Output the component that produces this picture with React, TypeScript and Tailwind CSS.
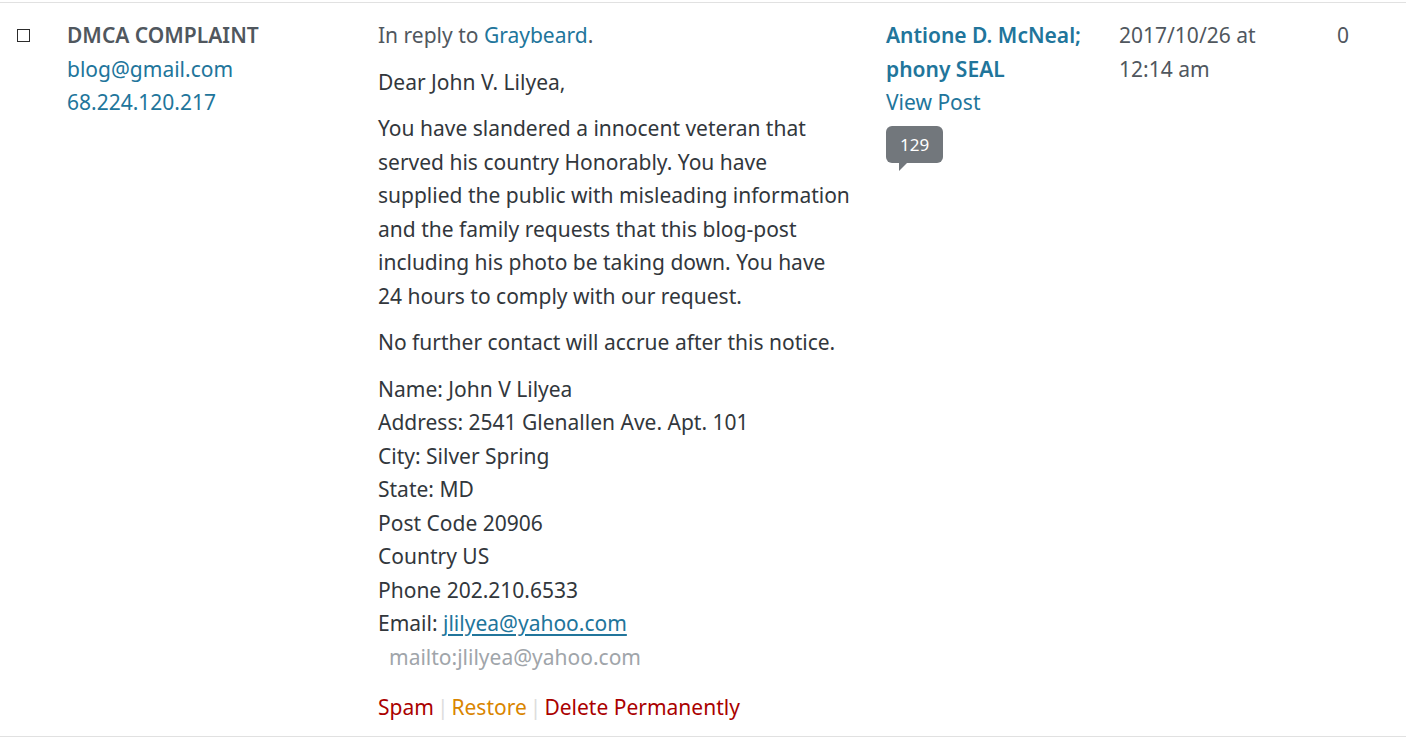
import React from 'react';

const FONT = "font-['Noto_Sans','Open_Sans',sans-serif]";

function Badge({ count }: { count: number }) {
  return (
    <span className="relative mt-[6px] inline-block self-start rounded-[6px] bg-[#72777c] px-[14px] py-[6px] text-[17px] leading-[25px] text-white">
      {count}
      <span className="absolute left-[13px] top-full h-0 w-0 border-r-[8px] border-t-[8px] border-r-transparent border-t-[#72777c]" />
    </span>
  );
}

export default function App() {
  return (
    <div className={`${FONT} min-h-screen bg-white text-[21px] leading-[33.5px] text-[#32373c]`}>
      <div className="mt-[2px] grid grid-cols-[50px_311px_508px_233px_218px_1fr] border-y border-[#e1e1e1] pb-[11px] pt-[16px]">
        {/* checkbox */}
        <div className="pl-[17px] pt-[10px]">
          <span className="block h-[13px] w-[13px] border-[1.5px] border-[#2c2c2c] bg-white" />
        </div>

        {/* author */}
        <div className="flex flex-col pl-[17px]">
          <strong className="font-semibold text-[#50575e]">DMCA COMPLAINT</strong>
          <a className="text-[#21759b]">blog@gmail.com</a>
          <a className="text-[#21759b]">68.224.120.217</a>
        </div>

        {/* comment */}
        <div className="pl-[17px]">
          <p className="text-[#50575e]">
            In reply to <a className="text-[#21759b]">Graybeard</a>.
          </p>
          <p className="mt-[13px]">Dear John V. Lilyea,</p>
          <p className="mt-[13px]">
            You have slandered a innocent veteran that
            <br />
            served his country Honorably. You have
            <br />
            supplied the public with misleading information
            <br />
            and the family requests that this blog-post
            <br />
            including his photo be taking down. You have
            <br />
            24 hours to comply with our request.
          </p>
          <p className="mt-[13px]">No further contact will accrue after this notice.</p>
          <p className="mt-[13px]">
            Name: John V Lilyea
            <br />
            Address: 2541 Glenallen Ave. Apt. 101
            <br />
            City: Silver Spring
            <br />
            State: MD
            <br />
            Post Code 20906
            <br />
            Country US
            <br />
            Phone 202.210.6533
            <br />
            Email: <a className="text-[#21759b] underline underline-offset-[3px]">jlilyea@yahoo.com</a>
            <br />
            <span className="pl-[11px] text-[#a0a5aa]">mailto:jlilyea@yahoo.com</span>
          </p>
          <div className="mt-[17px] flex items-center">
            <a className="text-[#a00]">Spam</a>
            <span className="mx-[3px] text-[#ddd]">|</span>
            <a className="text-[#d98500]">Restore</a>
            <span className="mx-[3px] text-[#ddd]">|</span>
            <a className="text-[#a00]">Delete Permanently</a>
          </div>
        </div>

        {/* response */}
        <div className="flex flex-col pl-[17px]">
          <a className="font-semibold text-[#21759b]">
            Antione D. McNeal;
            <br />
            phony SEAL
          </a>
          <a className="text-[#21759b]">View Post</a>
          <Badge count={129} />
        </div>

        {/* date */}
        <div className="pl-[17px] text-[#50575e]">
          2017/10/26 at
          <br />
          12:14 am
        </div>

        {/* count */}
        <div className="pl-[17px] text-[#50575e]">0</div>
      </div>
    </div>
  );
}
